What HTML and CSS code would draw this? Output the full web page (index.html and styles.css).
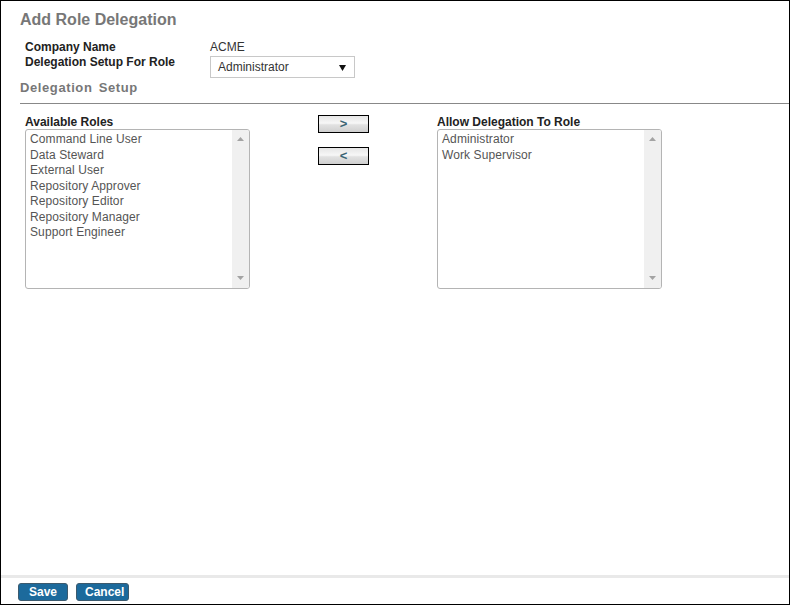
FILE: index.html
```html
<!DOCTYPE html>
<html>
<head>
<meta charset="utf-8">
<link rel="stylesheet" href="styles.css">
</head>
<body>
<div class="page">
  <div class="content">
    <h1 class="title">Add Role Delegation</h1>
    <div class="info">
      <div class="label">Company Name</div>
      <div class="value">ACME</div>
      <div class="label">Delegation Setup For Role</div>
      <div class="select">
        <span>Administrator</span>
        <svg class="caret" width="7" height="7" viewBox="0 0 7 7"><path d="M0 1 H7 L3.5 7 Z" fill="#111"/></svg>
      </div>
    </div>
    <h2 class="section">Delegation Setup</h2>
    <div class="rule"></div>
    <div class="roles">
      <div class="col">
        <div class="col-label">Available Roles</div>
        <div class="listbox">
          <div class="items">
            <div class="item">Command Line User</div>
            <div class="item">Data Steward</div>
            <div class="item">External User</div>
            <div class="item">Repository Approver</div>
            <div class="item">Repository Editor</div>
            <div class="item">Repository Manager</div>
            <div class="item">Support Engineer</div>
          </div>
          <div class="scroll">
            <svg width="7" height="4" viewBox="0 0 7 4"><path d="M0 4 L3.5 0 L7 4 Z" fill="#a3a3a3"/></svg>
            <svg width="7" height="4" viewBox="0 0 7 4"><path d="M0 0 L7 0 L3.5 4 Z" fill="#a3a3a3"/></svg>
          </div>
        </div>
      </div>
      <div class="movers">
        <button class="move">&gt;</button>
        <button class="move">&lt;</button>
      </div>
      <div class="col">
        <div class="col-label">Allow Delegation To Role</div>
        <div class="listbox">
          <div class="items">
            <div class="item">Administrator</div>
            <div class="item">Work Supervisor</div>
          </div>
          <div class="scroll">
            <svg width="7" height="4" viewBox="0 0 7 4"><path d="M0 4 L3.5 0 L7 4 Z" fill="#a3a3a3"/></svg>
            <svg width="7" height="4" viewBox="0 0 7 4"><path d="M0 0 L7 0 L3.5 4 Z" fill="#a3a3a3"/></svg>
          </div>
        </div>
      </div>
    </div>
  </div>
  <div class="footer">
    <button class="btn">Save</button>
    <button class="btn">Cancel</button>
  </div>
</div>
</body>
</html>
```
FILE: styles.css
```css
html, body {
  margin: 0;
  padding: 0;
  background: #fff;
}
body {
  font-family: "Liberation Sans", Arial, sans-serif;
  font-size: 12px;
}
.page {
  box-sizing: border-box;
  width: 790px;
  height: 605px;
  border: 1px solid #000;
  display: flex;
  flex-direction: column;
}
.content {
  flex: 1;
  padding-left: 19px;
}
.title {
  margin: 9px 0 0 0;
  font-size: 16px;
  line-height: 19px;
  font-weight: bold;
  color: #777;
}
.info {
  display: grid;
  grid-template-columns: 185px auto;
  grid-template-rows: 15px 22px;
  align-items: start;
  margin: 11px 0 0 5px;
}
.label {
  font-weight: bold;
  color: #222;
  line-height: 15px;
}
.value {
  color: #333;
  line-height: 15px;
  font-size: 12px;
}
.select {
  box-sizing: border-box;
  width: 145px;
  height: 22px;
  margin-top: 1px;
  border: 1px solid #c8c8c8;
  display: flex;
  align-items: center;
  justify-content: space-between;
  padding: 0 8px 0 7px;
  color: #333;
  font-size: 12px;
}
.caret {
  display: block;
}
.section {
  margin: 3px 0 0 0;
  font-size: 13px;
  line-height: 16px;
  font-weight: bold;
  color: #777;
  letter-spacing: 0.6px;
  word-spacing: 2px;
}
.rule {
  height: 1px;
  background: #888;
  margin-top: 7px;
}
.roles {
  display: flex;
  align-items: flex-start;
  margin: 11px 0 0 5px;
}
.col {
  width: 225px;
}
.col-label {
  font-weight: bold;
  color: #222;
  line-height: 14px;
}
.listbox {
  box-sizing: border-box;
  width: 225px;
  height: 160px;
  border: 1px solid #b4b4b4;
  border-radius: 3px;
  display: flex;
  overflow: hidden;
}
.items {
  flex: 1;
  padding: 2px 0 0 4px;
}
.item {
  color: #555;
  line-height: 15.5px;
  font-size: 12px;
  white-space: nowrap;
  letter-spacing: 0.1px;
}
.scroll {
  width: 17px;
  background: #f0f0f0;
  display: flex;
  flex-direction: column;
  justify-content: space-between;
  align-items: center;
  padding: 7px 0 8px 0;
}
.scroll svg {
  display: block;
}
.movers {
  width: 51px;
  margin: 0 68px;
  display: flex;
  flex-direction: column;
  gap: 14px;
}
.move {
  box-sizing: border-box;
  width: 51px;
  height: 18px;
  border: 1px solid #000;
  padding: 0;
  margin: 0;
  background: linear-gradient(#e6e6e6 0%, #f7f7f7 45%, #e2e2e2 55%, #cfcfcf 100%);
  font-family: "Liberation Sans", Arial, sans-serif;
  font-size: 13px;
  font-weight: bold;
  color: #3a6474;
  line-height: 16px;
}
.footer {
  height: 29px;
  box-sizing: border-box;
  border-top: 3px solid #e9e9e9;
  padding: 5px 0 0 17px;
  display: flex;
  gap: 8px;
  align-items: flex-start;
}
.btn {
  box-sizing: border-box;
  height: 18px;
  padding: 0 8px;
  margin: 0;
  border: 1px solid #3c5a6e;
  border-radius: 3px;
  background: #1c6a9c;
  color: #fff;
  font-family: "Liberation Sans", Arial, sans-serif;
  font-size: 12px;
  font-weight: bold;
  line-height: 16px;
}
.btn:first-child {
  width: 50px;
}
.btn:last-child {
  width: 53px;
}
```
